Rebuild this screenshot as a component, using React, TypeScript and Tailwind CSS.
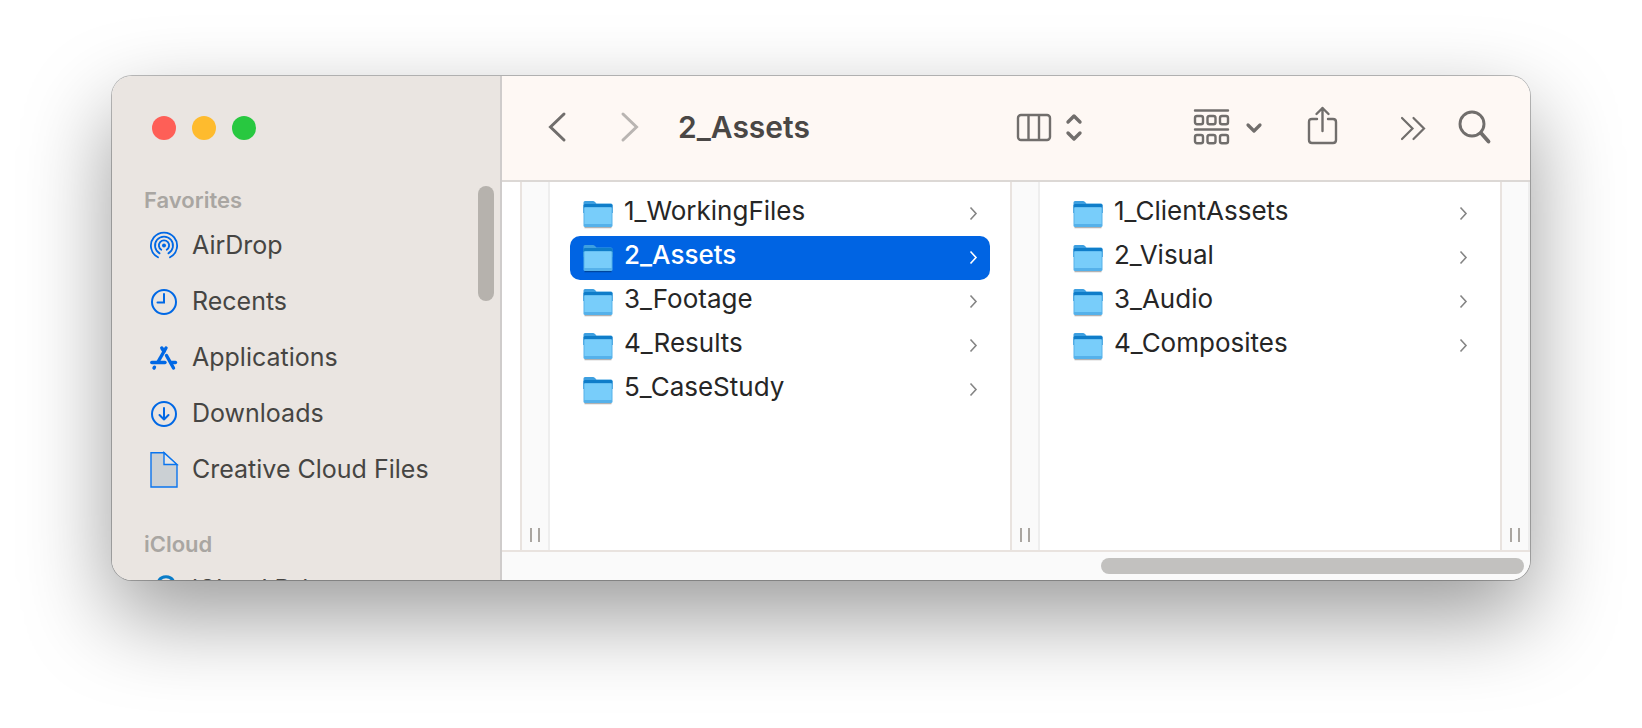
import type { ReactNode } from 'react'

const favorites = [
    { name: 'AirDrop', icon: <AirDropIcon /> },
    { name: 'Recents', icon: <RecentsIcon /> },
    { name: 'Applications', icon: <ApplicationsIcon /> },
    { name: 'Downloads', icon: <DownloadsIcon /> },
    { name: 'Creative Cloud Files', icon: <DocumentIcon /> },
]

const projectFolders = ['1_WorkingFiles', '2_Assets', '3_Footage', '4_Results', '5_CaseStudy']
const assetFolders = ['1_ClientAssets', '2_Visual', '3_Audio', '4_Composites']

function AirDropIcon() {
    return (
        <svg width="30" height="30" viewBox="0 0 30 30" fill="none" stroke="#0068e5" strokeWidth="1.8" strokeLinecap="round">
            <circle cx="15" cy="15.5" r="2" fill="#0068e5" stroke="none" />
            <path d="M12.3 19.8a5.1 5.1 0 1 1 5.4 0" />
            <path d="M10.6 23.4a9 9 0 1 1 8.8 0" />
            <path d="M9 27.3a13.1 13.1 0 1 1 12 0" />
        </svg>
    )
}

function RecentsIcon() {
    return (
        <svg width="30" height="30" viewBox="0 0 30 30" fill="none" stroke="#0068e5" strokeWidth="2" strokeLinecap="round">
            <circle cx="15" cy="16" r="12" />
            <path d="M15 8v8.5H8.5" />
        </svg>
    )
}

function ApplicationsIcon() {
    return (
        <svg width="30" height="30" viewBox="0 0 30 30" fill="none" stroke="#0068e5" strokeWidth="3.4" strokeLinecap="round">
            <path d="M17 6L9.5 19" />
            <path d="M12.8 6L15 9.5" />
            <path d="M2.8 20.5H16" />
            <path d="M17.5 13.5L24.5 26" />
            <path d="M22.5 20.5H26.5" />
            <path d="M5.5 25.2L5 26" />
        </svg>
    )
}

function DownloadsIcon() {
    return (
        <svg
            width="30"
            height="30"
            viewBox="0 0 30 30"
            fill="none"
            stroke="#0068e5"
            strokeWidth="2"
            strokeLinecap="round"
            strokeLinejoin="round"
        >
            <circle cx="15" cy="16" r="12" />
            <path d="M15 10v11.5M10.5 17l4.5 4.5 4.5-4.5" />
        </svg>
    )
}

function DocumentIcon() {
    return (
        <svg width="30" height="38" viewBox="0 0 30 38" stroke="#0a74ee" strokeWidth="1.4">
            <path d="M2 2.7H15L28 15V37H2Z" fill="#cbd0d4" />
            <path d="M15 2.7V14.5H28Z" fill="#e6e6e7" />
        </svg>
    )
}

function CloudIcon() {
    return (
        <svg width="30" height="32" viewBox="0 0 30 32" fill="none" stroke="#0a7cc8" strokeWidth="3">
            <path d="M8 21a6 6 0 0 1 1-11.5a8.5 8.5 0 0 1 16 0a6 6 0 0 1-1 11.5Z" />
        </svg>
    )
}

function FolderIcon() {
    return (
        <svg width="32" height="30" viewBox="0 0 32 30">
            <path d="M2.5 28.5H29.5" stroke="#000" strokeOpacity=".3" strokeWidth="1.5" />
            <path d="M1.5 3.5Q1.5 2 3 2H11Q12 2 13 3L14.5 4.5H29Q30.5 4.5 30.5 6V14H1.5Z" fill="#3d9fe0" />
            <path d="M1.5 6.5Q1.5 5 3 5H29Q30.5 5 30.5 6.5V14H1.5Z" fill="#0f7dc9" />
            <path d="M1.5 9.5Q1.5 8 3 8H29Q30.5 8 30.5 9.5V26.5Q30.5 28 29 28H3Q1.5 28 1.5 26.5Z" fill="#55b1ea" />
            <path d="M2.5 9.5Q2.5 8.5 3.5 8.5H28.5Q29.5 8.5 29.5 9.5V25H2.5Z" fill="#78cdfa" />
        </svg>
    )
}

function ChevronIcon() {
    return (
        <svg width="10" height="16" viewBox="0 0 10 16" fill="none" stroke="currentColor" strokeWidth="1.6">
            <path d="M2.5 1.5L8 7.5L2.5 13.5" />
        </svg>
    )
}

function SidebarRow({ name, icon }: { name: string; icon: ReactNode }) {
    return (
        <li>
            <a href="#" className="flex h-14 items-center gap-[13px] text-[25px] text-[#464543]">
                <span className="flex w-[30px] shrink-0 justify-center pb-[2px]">{icon}</span>
                <span className="whitespace-nowrap">{name}</span>
            </a>
        </li>
    )
}

function FolderColumn({ folders, selected }: { folders: string[]; selected?: string }) {
    return (
        <ul className="min-w-0 flex-1 px-5 pt-[10px]">
            {folders.map((folder) => (
                <li key={folder}>
                    <button
                        className={
                            folder === selected
                                ? 'flex h-11 w-full items-center rounded-[10px] bg-[#0064e3] px-3 text-[26px] font-medium text-white'
                                : 'flex h-11 w-full items-center rounded-[10px] px-3 text-[26px] text-[#262626]'
                        }
                    >
                        <FolderIcon />
                        <span className="ml-[10px] flex-1 pb-[6px] text-left leading-8 whitespace-nowrap">{folder}</span>
                        <span className={folder === selected ? 'text-white' : 'text-[#858585]'}>
                            <ChevronIcon />
                        </span>
                    </button>
                </li>
            ))}
        </ul>
    )
}

function ColumnHandle() {
    return (
        <div className="flex w-[30px] shrink-0 items-end justify-center gap-[6px] border-x-2 border-l-[#e9e3df] border-r-[#eeeeee] bg-[#fafafa] pb-2">
            <span className="h-[14px] w-[2px] bg-[#aaa6a1]" />
            <span className="h-[14px] w-[2px] bg-[#aaa6a1]" />
        </div>
    )
}

function Sidebar() {
    return (
        <aside className="relative w-[390px] shrink-0 overflow-hidden border-r-2 border-[#cfcccb] bg-[#eae5e1] pl-8">
            <div className="flex gap-4 pt-10 pl-2">
                <button aria-label="Close" className="size-6 rounded-full bg-[#fe5f57]" />
                <button aria-label="Minimize" className="size-6 rounded-full bg-[#febb2e]" />
                <button aria-label="Zoom" className="size-6 rounded-full bg-[#28c840]" />
            </div>
            <h2 className="mt-11 h-8 text-[22px] leading-8 font-semibold text-[#a9a6a2]">Favorites</h2>
            <ul className="pt-[2px] pl-[5px]">
                {favorites.map((item) => (
                    <SidebarRow key={item.name} {...item} />
                ))}
            </ul>
            <h2 className="mt-[30px] h-8 text-[22px] leading-8 font-semibold text-[#a9a6a2]">iCloud</h2>
            <ul className="pt-[2px] pl-[5px]">
                <SidebarRow name="iCloud Drive" icon={<CloudIcon />} />
            </ul>
            <div className="absolute top-[110px] right-[6px] h-[115px] w-4 rounded-full bg-[#b6b2ad]" />
        </aside>
    )
}

function Toolbar() {
    return (
        <header className="flex h-[106px] shrink-0 items-center border-b-2 border-[#dcd8d5] bg-[#fef8f4] pr-[38px] pb-[2px] pl-[45px] text-[#716e6c]">
            <button aria-label="Back">
                <svg width="20" height="32" viewBox="0 0 20 32" fill="none" stroke="currentColor" strokeWidth="3" strokeLinecap="round">
                    <path d="M17 3L3.5 16L17 29" />
                </svg>
            </button>
            <button aria-label="Forward" className="ml-[53px] text-[#b9b5b2]">
                <svg width="20" height="32" viewBox="0 0 20 32" fill="none" stroke="currentColor" strokeWidth="3" strokeLinecap="round">
                    <path d="M3 3L16.5 16L3 29" />
                </svg>
            </button>
            <h1 className="ml-[38px] flex-1 text-[30px] font-semibold whitespace-nowrap text-[#4a4745]">2_Assets</h1>
            <button aria-label="View as columns" className="flex items-center gap-[13px]">
                <svg width="36" height="30" viewBox="0 0 36 30" fill="none" stroke="currentColor" strokeWidth="2.4">
                    <rect x="2" y="3" width="32" height="25" rx="3" />
                    <path d="M12.5 3V28M23 3V28" />
                </svg>
                <svg
                    width="18"
                    height="30"
                    viewBox="0 0 18 30"
                    fill="none"
                    stroke="currentColor"
                    strokeWidth="3.4"
                    strokeLinecap="round"
                    strokeLinejoin="round"
                >
                    <path d="M3 10L9 4L15 10M3 21L9 27L15 21" />
                </svg>
            </button>
            <button aria-label="Group items" className="ml-[110px] flex items-center gap-[14px]">
                <svg width="38" height="38" viewBox="0 0 38 38" fill="none" stroke="currentColor" strokeWidth="2.4" strokeLinecap="round">
                    <path d="M2 2.5H35M2 21.5H35" />
                    <rect x="2" y="8" width="8" height="8.3" rx="2" />
                    <rect x="14.5" y="8" width="8" height="8.3" rx="2" />
                    <rect x="27" y="8" width="8" height="8.3" rx="2" />
                    <rect x="2" y="27" width="8" height="8.3" rx="2" />
                    <rect x="14.5" y="27" width="8" height="8.3" rx="2" />
                    <rect x="27" y="27" width="8" height="8.3" rx="2" />
                </svg>
                <svg
                    width="18"
                    height="14"
                    viewBox="0 0 18 14"
                    fill="none"
                    stroke="currentColor"
                    strokeWidth="3.2"
                    strokeLinecap="round"
                    strokeLinejoin="round"
                >
                    <path d="M3 5L9 11L15 5" />
                </svg>
            </button>
            <button aria-label="Share" className="ml-11">
                <svg
                    width="32"
                    height="42"
                    viewBox="0 0 32 42"
                    fill="none"
                    stroke="currentColor"
                    strokeWidth="2.4"
                    strokeLinecap="round"
                    strokeLinejoin="round"
                >
                    <path d="M10 13H5Q2 13 2 16V34Q2 37 5 37H26Q29 37 29 34V16Q29 13 26 13H21" />
                    <path d="M15.5 25V2M9.5 8L15.5 2L21.5 8" />
                </svg>
            </button>
            <button aria-label="More" className="ml-[61px]">
                <svg width="26" height="30" viewBox="0 0 26 30" fill="none" stroke="currentColor" strokeWidth="2.2" strokeLinecap="round">
                    <path d="M2 6L12.5 16.5L2 27M13.5 6L24 16.5L13.5 27" />
                </svg>
            </button>
            <button aria-label="Search" className="ml-8">
                <svg width="34" height="36" viewBox="0 0 34 36" fill="none" stroke="currentColor" strokeLinecap="round">
                    <circle cx="14" cy="15" r="12" strokeWidth="2.9" />
                    <path d="M23 24L30.5 32.5" strokeWidth="3.8" />
                </svg>
            </button>
        </header>
    )
}

export default function App() {
    return (
        <div className="flex h-screen overflow-hidden bg-white px-28 pt-[76px] pb-[148px] font-[Inter,'Liberation_Sans',sans-serif]">
            <main className="flex min-w-0 flex-1 overflow-hidden rounded-[20px] bg-white shadow-[0_0_0_1px_rgba(0,0,0,0.25),0_36px_88px_rgba(0,0,0,0.4)]">
                <Sidebar />
                <div className="flex min-w-0 flex-1 flex-col">
                    <Toolbar />
                    <div className="flex min-h-0 flex-1">
                        <div className="w-[18px] shrink-0" />
                        <ColumnHandle />
                        <FolderColumn folders={projectFolders} selected="2_Assets" />
                        <ColumnHandle />
                        <FolderColumn folders={assetFolders} />
                        <ColumnHandle />
                    </div>
                    <div className="flex h-[30px] shrink-0 items-center justify-end border-t-2 border-[#e9e3df] bg-[#fafafa] pr-[6px]">
                        <div className="h-4 w-[423px] rounded-full bg-[#c2c1bf]" />
                    </div>
                </div>
            </main>
        </div>
    )
}
